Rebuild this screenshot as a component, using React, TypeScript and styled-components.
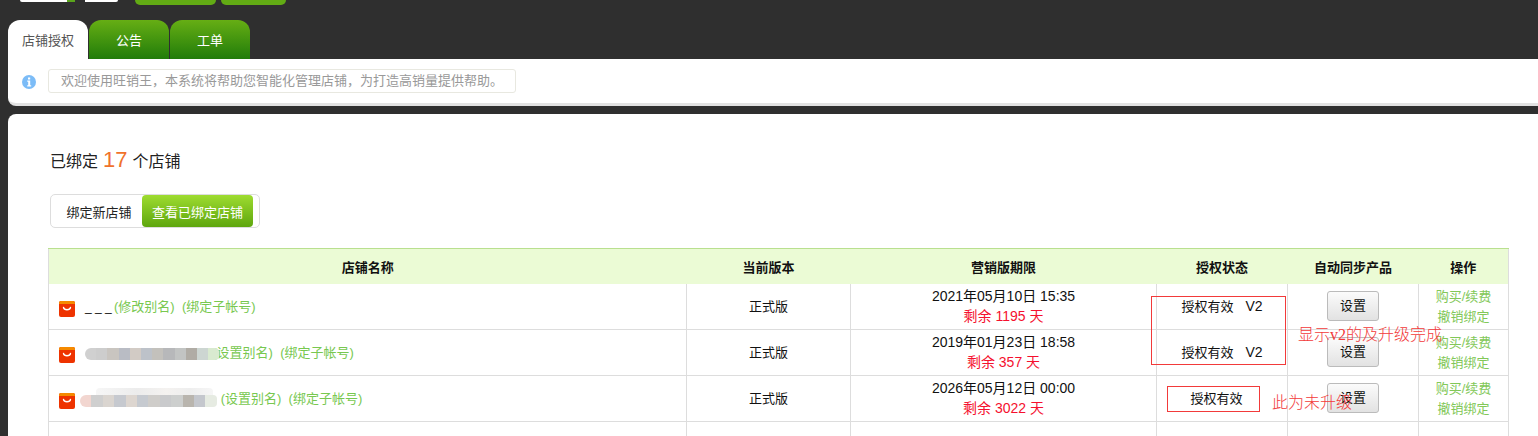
import * as React from "react";
import { styled, createGlobalStyle } from "styled-components";

const GlobalStyle = createGlobalStyle`
  html, body {
    margin: 0;
    padding: 0;
    height: 436px;
    overflow: hidden;
    background: #2f2f2f;
  }
  body {
    font-family: "Liberation Sans", "Noto Sans CJK SC", sans-serif;
    font-size: 13px;
    color: #111;
  }
`;

const Page = styled.div`
  position: relative;
  width: 1538px;
  height: 436px;
  overflow: hidden;
`;

const TopBar = styled.div`
  display: flex;
  height: 20px;
  padding-left: 20px;
`;

const LogoStub = styled.div`
  width: 98px;
  height: 2px;
  margin-right: 17px;
  background: linear-gradient(
    90deg,
    #fff 0 48%,
    #5aa41c 48% 56%,
    #2f2f2f 56% 66%,
    #fff 66% 100%
  );
  border-radius: 0 0 3px 3px;
`;

const TopButton = styled.div<{ $w: number }>`
  width: ${(p) => p.$w}px;
  height: 5px;
  margin-right: 5px;
  background: #62ab14;
  border-radius: 0 0 5px 5px;
`;

const Tabs = styled.div`
  display: flex;
  gap: 1px;
  padding-left: 8px;
  height: 39px;
`;

const Tab = styled.div<{ $active?: boolean; $w: number }>`
  width: ${(p) => p.$w}px;
  display: flex;
  align-items: center;
  justify-content: center;
  padding-bottom: 1px;
  box-sizing: border-box;
  border-radius: 12px 12px 0 0;
  background: ${(p) =>
    p.$active ? "#fff" : "linear-gradient(#66ae14, #217c0a)"};
  color: ${(p) => (p.$active ? "#555" : "#fff")};
  font-size: 13px;
`;

const NoticePanel = styled.div`
  margin-left: 8px;
  display: flex;
  align-items: flex-start;
  gap: 12px;
  padding: 10px 0 0 14px;
  background: #fff;
  border-bottom: 3px solid #e2e2e2;
  border-radius: 0 0 0 8px;
  height: 34px;
`;

const InfoIcon = styled.svg`
  width: 14px;
  height: 14px;
  margin-top: 6px;
`;

const NoticeText = styled.div`
  width: 468px;
  height: 24px;
  line-height: 22px;
  box-sizing: border-box;
  padding-left: 12px;
  border: 1px solid #e8e8e0;
  border-radius: 3px;
  color: #999;
  font-size: 13px;
`;

const MainPanel = styled.div`
  margin: 8px 0 0 8px;
  padding: 33px 29px 0 40px;
  height: 400px;
  background: #fff;
  border-radius: 8px 0 0 0;
`;

const Title = styled.div`
  display: flex;
  align-items: baseline;
  gap: 5px;
  height: 25px;
  padding-left: 2px;
  font-size: 16px;
  line-height: 25px;
  color: #222;
`;

const Count = styled.span`
  font-size: 22px;
  color: #f0722c;
`;

const SwitchGroup = styled.div`
  display: inline-flex;
  margin: 22px 0 0 2px;
  width: 210px;
  height: 34px;
  box-sizing: border-box;
  padding: 0 6px 0 1px;
  border: 1px solid #ddd;
  border-radius: 5px;
`;

const SwitchItem = styled.div<{ $active?: boolean }>`
  flex: ${(p) => (p.$active ? "0 0 111px" : "1")};
  display: flex;
  align-items: center;
  justify-content: center;
  padding-left: ${(p) => (p.$active ? 0 : 4)}px;
  border-radius: 4px;
  font-size: 13px;
  color: ${(p) => (p.$active ? "#fff" : "#222")};
  background: ${(p) =>
    p.$active ? "linear-gradient(#9edc30, #5ea60e)" : "transparent"};
`;

const ShopTable = styled.table`
  margin-top: 20px;
  width: 1460px;
  table-layout: fixed;
  border-collapse: collapse;
  border-left: 1px solid #ddd;
  border-right: 1px solid #ddd;
`;

const Th = styled.th`
  height: 35px;
  padding: 0;
  background: #ebfbd5;
  border-top: 1px solid #b9e08f;
  font-size: 13px;
  font-weight: 700;
  color: #111;
`;

const Td = styled.td<{ $left?: boolean }>`
  height: 45px;
  padding: 0;
  border-bottom: 1px solid #ddd;
  border-left: 1px solid #ddd;
  text-align: ${(p) => (p.$left ? "left" : "center")};
  font-size: 13px;
  line-height: 20px;
  color: #111;
  &:first-child {
    border-left: 0;
  }
`;

const NameCell = styled.div`
  display: flex;
  align-items: center;
  padding: 5px 0 0 10px;
`;

const ShopIcon = styled.svg`
  flex: none;
  width: 16px;
  height: 16px;
  margin-right: 10px;
`;

const ShopName = styled.span`
  width: 29px;
  margin-top: -5px;
  font-size: 12px;
  white-space: nowrap;
`;

const Mosaic = styled.span<{ $offset: number; $top: number }>`
  position: relative;
  z-index: 1;
  display: inline-flex;
  height: 12px;
  margin-top: ${(p) => p.$top}px;
  margin-left: ${(p) => p.$offset}px;
`;

const MosaicCell = styled.i<{ $w: number }>`
  display: block;
  width: ${(p) => p.$w}px;
  height: 12px;
  &:first-of-type {
    border-radius: 6px 0 0 6px;
  }
  &:last-of-type {
    border-radius: 0 4px 4px 0;
  }
`;

const MosaicHaze = styled.span`
  position: absolute;
  left: 16px;
  right: 4px;
  top: -7px;
  height: 7px;
  border-radius: 4px 4px 0 0;
  background: linear-gradient(
    90deg,
    #f6f6f6,
    #ececec 35%,
    #f4f2f0 60%,
    #eeeeee 80%,
    #f6f6f6
  );
`;

const NameLink = styled.a<{ $gap?: number }>`
  margin-top: -5px;
  margin-left: ${(p) => p.$gap ?? 0}px;
  color: #78c850;
  white-space: pre;
`;

const DateLine = styled.div`
  margin-top: -1px;
  font-size: 14px;
`;

const Remain = styled.div`
  font-size: 14px;
  color: #f5102e;
`;

const StatusVersion = styled.span`
  margin-left: 12px;
  font-size: 14px;
`;

const StatusPending = styled.span`
  padding-right: 11px;
`;

const SettingButton = styled.button`
  display: block;
  width: 52px;
  height: 30px;
  margin: -1px auto 1px;
  padding: 0;
  border: 1px solid #bbb;
  border-radius: 3px;
  background: linear-gradient(#fbfbfb, #e2e2e2);
  font: inherit;
  color: #111;
`;

const Action = styled.div`
  color: #82c858;
`;

const Annotation = styled.div<{ $x: number; $y: number; $w: number; $h: number }>`
  position: absolute;
  left: ${(p) => p.$x}px;
  top: ${(p) => p.$y}px;
  width: ${(p) => p.$w}px;
  height: ${(p) => p.$h}px;
  border: 1px solid #f23a3a;
  box-sizing: border-box;
`;

const Note = styled.div<{ $x: number; $y: number }>`
  position: absolute;
  left: ${(p) => p.$x}px;
  top: ${(p) => p.$y}px;
  font-size: 16px;
  line-height: 20px;
  font-weight: 300;
  color: #f23a3a;
  white-space: nowrap;
`;

const NoteLatin = styled.span`
  font-family: "Liberation Serif", serif;
`;

const mosaicA = [
  "#d0d0d0", "#cdcdcd", "#c9c5c0", "#b9bcc4", "#d2cbc5", "#bdc2c9",
  "#c3c1bc", "#b7b8ba", "#c2c4c3", "#b0aca5", "#cdd6d2", "#d9ead0",
];
const mosaicB = [
  "#f2d6d0", "#cfcfcf", "#dad5d0", "#c6c9cf", "#ddd6d0", "#c6cad0",
  "#cfcdca", "#c9cacc", "#cdcfce", "#b9b5ae", "#c4c7cd", "#e6ebe2",
];

interface IShopRow {
  name?: string;
  mosaic?: string[];
  mosaicOffset?: number;
  mosaicTop?: number;
  mosaicCell?: number;
  linkGap?: number;
  alias: string;
  expires: string;
  remain: string;
  version?: string;
}

const rows: IShopRow[] = [
  {
    name: "_ _ _",
    alias: "(修改别名)",
    expires: "2021年05月10日 15:35",
    remain: "剩余 1195 天",
    version: "V2",
  },
  {
    mosaic: mosaicA,
    mosaicOffset: 0,
    mosaicTop: -2,
    mosaicCell: 11.2,
    linkGap: -7,
    alias: "(设置别名)",
    expires: "2019年01月23日 18:58",
    remain: "剩余 357 天",
    version: "V2",
  },
  {
    mosaic: mosaicB,
    mosaicOffset: -5,
    mosaicTop: 0,
    mosaicCell: 11.4,
    linkGap: 4,
    alias: "(设置别名)",
    expires: "2026年05月12日 00:00",
    remain: "剩余 3022 天",
  },
  {
    alias: "",
    expires: "",
    remain: "",
  },
];

function AliIcon() {
  return (
    <ShopIcon viewBox="0 0 16 16">
      <rect width="16" height="16" rx="2" fill="#ee3300" />
      <path d="M2 0h12a2 2 0 0 1 2 2v1H0V2a2 2 0 0 1 2-2z" fill="#f58a00" />
      <path
        d="M4.5 6.5c.6 3 6.4 3 7 0"
        fill="none"
        stroke="#fff"
        strokeWidth="1.3"
        strokeLinecap="round"
      />
    </ShopIcon>
  );
}

export default function App() {
  return (
    <Page>
      <GlobalStyle />
      <TopBar>
        <LogoStub />
        <TopButton $w={81} />
        <TopButton $w={65} />
      </TopBar>
      <Tabs>
        <Tab $active $w={80}>店铺授权</Tab>
        <Tab $w={80}>公告</Tab>
        <Tab $w={80}>工单</Tab>
      </Tabs>
      <NoticePanel>
        <InfoIcon viewBox="0 0 14 14">
          <circle cx="7" cy="7" r="7" fill="#7cbcf7" />
          <rect x="6" y="2.5" width="2.2" height="2" fill="#fff" />
          <path d="M5.2 5.6h3v4.6h1v1.2H5.2v-1.2h1V6.8h-1z" fill="#fff" />
        </InfoIcon>
        <NoticeText>欢迎使用旺销王，本系统将帮助您智能化管理店铺，为打造高销量提供帮助。</NoticeText>
      </NoticePanel>
      <MainPanel>
        <Title>
          已绑定 <Count>17</Count> 个店铺
        </Title>
        <SwitchGroup>
          <SwitchItem>绑定新店铺</SwitchItem>
          <SwitchItem $active>查看已绑定店铺</SwitchItem>
        </SwitchGroup>
        <ShopTable>
          <colgroup>
            <col width="638" />
            <col width="164" />
            <col width="306" />
            <col width="131" />
            <col width="131" />
            <col width="90" />
          </colgroup>
          <thead>
            <tr>
              <Th>店铺名称</Th>
              <Th>当前版本</Th>
              <Th>营销版期限</Th>
              <Th>授权状态</Th>
              <Th>自动同步产品</Th>
              <Th>操作</Th>
            </tr>
          </thead>
          <tbody>
            {rows.map((row, index) => (
              <tr key={index}>
                <Td $left>
                  {row.alias && (
                    <NameCell>
                      <AliIcon />
                      {row.name && <ShopName>{row.name}</ShopName>}
                      {row.mosaic && (
                        <Mosaic
                          $offset={row.mosaicOffset ?? 0}
                          $top={row.mosaicTop ?? 0}
                        >
                          {index === 2 && <MosaicHaze />}
                          {row.mosaic.map((color, i) => (
                            <MosaicCell
                              key={i}
                              $w={row.mosaicCell ?? 12}
                              style={{ background: color }}
                            />
                          ))}
                        </Mosaic>
                      )}
                      <NameLink $gap={row.linkGap}>
                        {row.alias}  (绑定子帐号)
                      </NameLink>
                    </NameCell>
                  )}
                </Td>
                <Td>{row.alias && "正式版"}</Td>
                <Td>
                  {row.expires && <DateLine>{row.expires}</DateLine>}
                  {row.remain && <Remain>{row.remain}</Remain>}
                </Td>
                <Td>
                  {row.alias &&
                    (row.version ? (
                      <>
                        授权有效<StatusVersion>{row.version}</StatusVersion>
                      </>
                    ) : (
                      <StatusPending>授权有效</StatusPending>
                    ))}
                </Td>
                <Td>{row.alias && <SettingButton>设置</SettingButton>}</Td>
                <Td>
                  {row.alias && (
                    <>
                      <Action>购买/续费</Action>
                      <Action>撤销绑定</Action>
                    </>
                  )}
                </Td>
              </tr>
            ))}
          </tbody>
        </ShopTable>
      </MainPanel>
      <Annotation $x={1151} $y={296} $w={135} $h={69} />
      <Annotation $x={1167} $y={386} $w={93} $h={26} />
      <Note $x={1298} $y={325}>
        显示<NoteLatin>v2</NoteLatin>的及升级完成
      </Note>
      <Note $x={1272} $y={393}>此为未升级</Note>
    </Page>
  );
}
